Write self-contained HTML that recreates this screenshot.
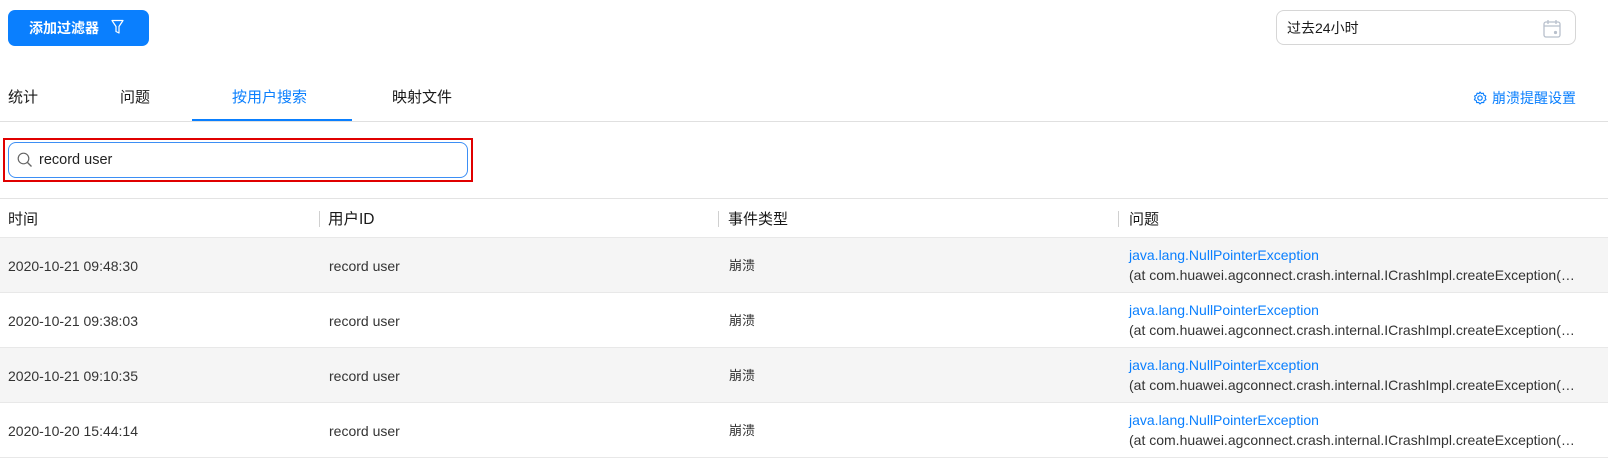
<!DOCTYPE html>
<html><head><meta charset="utf-8"><style>
*{margin:0;padding:0;box-sizing:border-box}
body{width:1608px;height:466px;background:#fff;font-family:"Liberation Sans","Noto Sans CJK SC",sans-serif;color:#191919;position:relative;overflow:hidden;font-size:14px}
.a{position:absolute;white-space:nowrap}
.btn{left:8px;top:10px;width:141px;height:36px;background:#0a7ffe;border-radius:7px;color:#fff;font-size:14px;font-weight:bold}
.date{left:1276px;top:10px;width:300px;height:35px;border:1px solid #d6d6d6;border-radius:8px}
.tab{top:88px;font-size:15px;line-height:20px}
.row{left:0;width:1608px;height:55px;border-bottom:1px solid #e8e8e8}
.cell{font-size:14px;color:#333;line-height:16px}
.cj{font-size:13px;color:#333;line-height:16px}
.sep{width:1px;height:16px;background:#d0d0d0;top:211px}
.h{top:211px;font-size:15px;line-height:18px}
</style></head><body>
<div class="a btn"><span class="a" style="left:21px;top:9px;line-height:18px">添加过滤器</span>
<svg class="a" style="left:103px;top:9px" width="13" height="16" viewBox="0 0 13 16"><path d="M1 1.5h11l-4 6v6.5l-3-1.5v-5z" fill="none" stroke="#fff" stroke-width="1.2" stroke-linejoin="round"/></svg></div>
<div class="a date"><span class="a" style="left:10px;top:8px;line-height:18px;font-size:14px">过去24小时</span>
<svg class="a" style="left:266px;top:8px" width="18" height="19" viewBox="0 0 18 19"><rect x="1" y="3" width="16" height="15" rx="2" fill="none" stroke="#b8c0cc" stroke-width="1.3"/><path d="M1 7h16M5 1v4M13 1v4" stroke="#b8c0cc" stroke-width="1.3"/><circle cx="12.5" cy="13.5" r="1.6" fill="#b8c0cc"/></svg></div>
<div class="a tab" style="left:8px">统计</div>
<div class="a tab" style="left:120px">问题</div>
<div class="a tab" style="left:232px;color:#0a7ffe">按用户搜索</div>
<div class="a tab" style="left:392px">映射文件</div>
<div class="a" style="left:192px;top:119px;width:160px;height:2px;background:#0a7ffe"></div>
<div class="a" style="left:0;top:121px;width:1608px;height:1px;background:#e0e0e0"></div>
<svg class="a" style="left:1473px;top:91px" width="14" height="14" viewBox="0 0 14 14"><circle cx="7" cy="7" r="2.2" fill="none" stroke="#0a7ffe" stroke-width="1.2"/><path d="M7 1l1.3 1.6 2-.4.6 2 1.9.8-.7 1.9.9 1.8-1.9.9-.4 2-2-.2L7 13l-1.3-1.6-2 .2-.4-2-1.9-.9.9-1.8-.7-1.9 1.9-.8.6-2 2 .4z" fill="none" stroke="#0a7ffe" stroke-width="1.1" stroke-linejoin="round"/></svg>
<div class="a" style="left:1492px;top:89px;font-size:14px;color:#0a7ffe;line-height:18px">崩溃提醒设置</div>
<div class="a" style="left:3px;top:138px;width:470px;height:44px;border:2px solid #e00000"></div>
<div class="a" style="left:8px;top:142px;width:460px;height:36px;border:1px solid #3d8ff5;border-radius:8px"></div>
<svg class="a" style="left:17px;top:152px" width="16" height="16" viewBox="0 0 16 16"><circle cx="6.5" cy="6.5" r="5.3" fill="none" stroke="#666" stroke-width="1.2"/><path d="M10.5 10.5l4 4" stroke="#666" stroke-width="1.3"/></svg>
<div class="a" style="left:39px;top:151px;font-size:14.5px;color:#222;line-height:18px">record user</div>
<div class="a" style="left:0;top:198px;width:1608px;height:1px;background:#e3e3e3"></div>
<div class="a" style="left:0;top:237px;width:1608px;height:1px;background:#e8e8e8"></div>
<div class="a h" style="left:8px">时间</div>
<div class="a sep" style="left:319px"></div><div class="a h" style="left:328px;font-size:15.5px">用户ID</div>
<div class="a sep" style="left:718px"></div><div class="a h" style="left:728px">事件类型</div>
<div class="a sep" style="left:1118px"></div><div class="a h" style="left:1129px">问题</div>

<div class="a row" style="top:238px;background:#f5f5f5"></div>
<div class="a row" style="top:293px"></div>
<div class="a row" style="top:348px;background:#f5f5f5"></div>
<div class="a row" style="top:403px"></div>

<div class="a cell" style="left:8px;top:258px">2020-10-21 09:48:30</div>
<div class="a cell" style="left:329px;top:258px">record user</div>
<div class="a cj" style="left:729px;top:258px">崩溃</div>
<div class="a cell" style="left:1129px;top:247px;color:#0a7ffe">java.lang.NullPointerException</div>
<div class="a cell" style="left:1129px;top:267px">(at com.huawei.agconnect.crash.internal.ICrashImpl.createException(…</div>

<div class="a cell" style="left:8px;top:313px">2020-10-21 09:38:03</div>
<div class="a cell" style="left:329px;top:313px">record user</div>
<div class="a cj" style="left:729px;top:313px">崩溃</div>
<div class="a cell" style="left:1129px;top:302px;color:#0a7ffe">java.lang.NullPointerException</div>
<div class="a cell" style="left:1129px;top:322px">(at com.huawei.agconnect.crash.internal.ICrashImpl.createException(…</div>

<div class="a cell" style="left:8px;top:368px">2020-10-21 09:10:35</div>
<div class="a cell" style="left:329px;top:368px">record user</div>
<div class="a cj" style="left:729px;top:368px">崩溃</div>
<div class="a cell" style="left:1129px;top:357px;color:#0a7ffe">java.lang.NullPointerException</div>
<div class="a cell" style="left:1129px;top:377px">(at com.huawei.agconnect.crash.internal.ICrashImpl.createException(…</div>

<div class="a cell" style="left:8px;top:423px">2020-10-20 15:44:14</div>
<div class="a cell" style="left:329px;top:423px">record user</div>
<div class="a cj" style="left:729px;top:423px">崩溃</div>
<div class="a cell" style="left:1129px;top:412px;color:#0a7ffe">java.lang.NullPointerException</div>
<div class="a cell" style="left:1129px;top:432px">(at com.huawei.agconnect.crash.internal.ICrashImpl.createException(…</div>
</body></html>
